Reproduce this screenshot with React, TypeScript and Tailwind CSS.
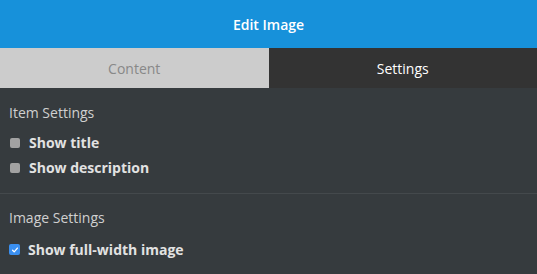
import React, { useState } from 'react';

const font = { fontFamily: '"Open Sans", "Noto Sans", sans-serif' };

function Check({ label, checked, onChange }: { label: string; checked: boolean; onChange: () => void }) {
  return (
    <label
      className={`flex h-[25px] cursor-pointer items-center ${checked ? 'gap-[8px] pl-[9px]' : 'gap-[9px] pl-[10px]'}`}
      onClick={onChange}
    >
      {checked ? (
        <span className="flex h-[11px] w-[11px] items-center justify-center rounded-[2px] bg-[#3a8ff0]">
          <svg viewBox="0 0 10 10" className="h-[8px] w-[8px]" fill="none" stroke="white" strokeWidth={1.6} strokeLinecap="round" strokeLinejoin="round">
            <path d="M2 5.3l2 2L8 2.6" />
          </svg>
        </span>
      ) : (
        <span className="h-[10px] w-[10px] rounded-[2px] bg-[#a2a2a2]" />
      )}
      <span className="text-[14px] font-bold leading-[20px] text-[#e2e2e2]">{label}</span>
    </label>
  );
}

export default function App() {
  const [tab, setTab] = useState<'content' | 'settings'>('settings');
  const [opts, setOpts] = useState({ title: false, desc: false, full: true });

  return (
    <div className="h-[274px] w-[537px] overflow-hidden bg-[#363b3e]" style={font}>
      <div className="flex h-[48px] items-center justify-center bg-[#1791da] text-[14px] font-semibold text-white">Edit Image</div>
      <div className="grid h-[40px] grid-cols-2 text-[14px]">
        <button
          onClick={() => setTab('content')}
          className={tab === 'content' ? 'bg-[#333333] text-white' : 'bg-[#cccccc] text-[#888888]'}
        >
          Content
        </button>
        <button
          onClick={() => setTab('settings')}
          className={tab === 'settings' ? 'bg-[#333333] text-white' : 'bg-[#cccccc] text-[#888888]'}
        >
          Settings
        </button>
      </div>

      <div className="h-[106px] border-b border-[#44494c] pt-[15px]">
        <div className="mb-[7px] pl-[9px] text-[14px] leading-[20px] text-[#d0d0d0]">Item Settings</div>
        <Check label="Show title" checked={opts.title} onChange={() => setOpts({ ...opts, title: !opts.title })} />
        <Check label="Show description" checked={opts.desc} onChange={() => setOpts({ ...opts, desc: !opts.desc })} />
      </div>

      <div className="pt-[14px]">
        <div className="mb-[9px] pl-[9px] text-[14px] leading-[20px] text-[#d0d0d0]">Image Settings</div>
        <Check label="Show full-width image" checked={opts.full} onChange={() => setOpts({ ...opts, full: !opts.full })} />
      </div>
    </div>
  );
}
